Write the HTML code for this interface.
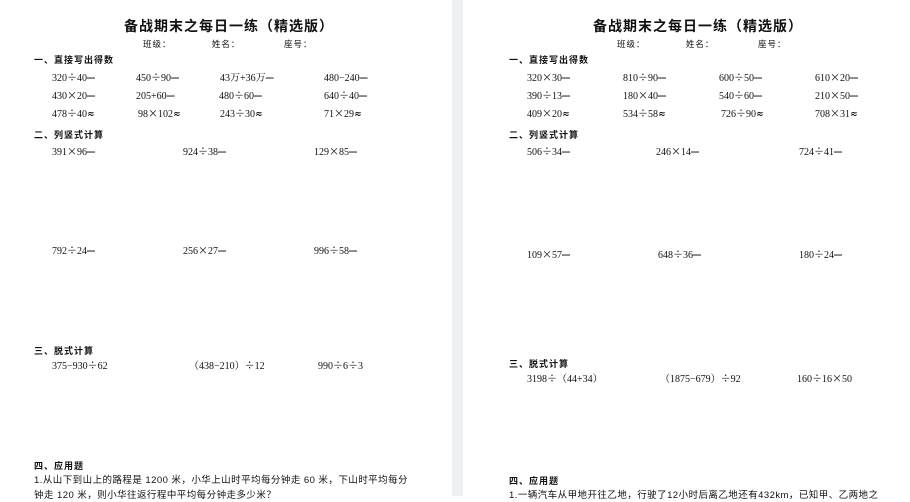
<!DOCTYPE html><html><head><meta charset="utf-8"><style>
body{margin:0;width:910px;height:496px;overflow:hidden;background:#fff;position:relative;font-family:"Liberation Serif","Noto Serif CJK SC",serif;color:#111}
.t{position:absolute;white-space:nowrap;font-size:10px;line-height:12px;height:12px}
.t s{text-decoration:none;font-family:"Noto Sans CJK SC",sans-serif;font-size:10px;line-height:0;vertical-align:0}
.t b{font-family:"Noto Sans CJK SC",sans-serif;font-weight:900;font-size:8px;line-height:0;vertical-align:0}
.h{font-family:"Liberation Sans","Noto Sans CJK SC",sans-serif;font-weight:bold;font-size:9px;letter-spacing:1px}
.ti{font-family:"Liberation Sans","Noto Sans CJK SC",sans-serif;font-weight:bold;font-size:14px;line-height:16px;letter-spacing:1px}
.i{font-family:"Liberation Sans","Noto Sans CJK SC",sans-serif;font-size:8.5px;letter-spacing:1px}
.p{font-family:"Liberation Sans","Noto Sans CJK SC",sans-serif;font-size:9.5px;letter-spacing:0.45px}
</style></head><body>
<div style="position:absolute;left:452px;top:0;width:11px;height:496px;background:#eef0f4"></div>
<!-- left -->
<div class="t ti" style="left:124px;top:18px">备战期末之每日一练（精选版）</div>
<div class="t i" style="left:143px;top:38px">班级：&nbsp;&nbsp;&nbsp;&nbsp;&nbsp;&nbsp;&nbsp;&nbsp;&nbsp;&nbsp;&nbsp;&nbsp;姓名：&nbsp;&nbsp;&nbsp;&nbsp;&nbsp;&nbsp;&nbsp;&nbsp;&nbsp;&nbsp;&nbsp;&nbsp;&nbsp;座号：</div>
<div class="t h" style="left:34px;top:54px">一、直接写出得数</div>
<div class="t" style="left:52px;top:73px">320<s>÷</s>40<b>━</b></div><div class="t" style="left:136px;top:73px">450<s>÷</s>90<b>━</b></div><div class="t" style="left:220px;top:73px">43万+36万<b>━</b></div><div class="t" style="left:324px;top:73px">480−240<b>━</b></div>
<div class="t" style="left:52px;top:91px">430<s>×</s>20<b>━</b></div><div class="t" style="left:136px;top:91px">205+60<b>━</b></div><div class="t" style="left:219px;top:91px">480<s>÷</s>60<b>━</b></div><div class="t" style="left:324px;top:91px">640<s>÷</s>40<b>━</b></div>
<div class="t" style="left:52px;top:109px">478<s>÷</s>40<b>≈</b></div><div class="t" style="left:138px;top:109px">98<s>×</s>102<b>≈</b></div><div class="t" style="left:220px;top:109px">243<s>÷</s>30<b>≈</b></div><div class="t" style="left:324px;top:109px">71<s>×</s>29<b>≈</b></div>
<div class="t h" style="left:34px;top:129px">二、列竖式计算</div>
<div class="t" style="left:52px;top:147px">391<s>×</s>96<b>━</b></div><div class="t" style="left:183px;top:147px">924<s>÷</s>38<b>━</b></div><div class="t" style="left:314px;top:147px">129<s>×</s>85<b>━</b></div>
<div class="t" style="left:52px;top:246px">792<s>÷</s>24<b>━</b></div><div class="t" style="left:183px;top:246px">256<s>×</s>27<b>━</b></div><div class="t" style="left:314px;top:246px">996<s>÷</s>58<b>━</b></div>
<div class="t h" style="left:34px;top:345px">三、脱式计算</div>
<div class="t" style="left:52px;top:361px">375−930<s>÷</s>62</div><div class="t" style="left:189px;top:361px">（438−210）<s>÷</s>12</div><div class="t" style="left:318px;top:361px">990<s>÷</s>6<s>÷</s>3</div>
<div class="t h" style="left:34px;top:460px">四、应用题</div>
<div class="t p" style="left:34px;top:475px">1.从山下到山上的路程是 1200 米，小华上山时平均每分钟走 60 米，下山时平均每分</div>
<div class="t p" style="left:34px;top:490px">钟走 120 米，则小华往返行程中平均每分钟走多少米？</div>
<!-- right -->
<div class="t ti" style="left:593px;top:18px">备战期末之每日一练（精选版）</div>
<div class="t i" style="left:617px;top:38px">班级：&nbsp;&nbsp;&nbsp;&nbsp;&nbsp;&nbsp;&nbsp;&nbsp;&nbsp;&nbsp;&nbsp;&nbsp;姓名：&nbsp;&nbsp;&nbsp;&nbsp;&nbsp;&nbsp;&nbsp;&nbsp;&nbsp;&nbsp;&nbsp;&nbsp;&nbsp;座号：</div>
<div class="t h" style="left:509px;top:54px">一、直接写出得数</div>
<div class="t" style="left:527px;top:73px">320<s>×</s>30<b>━</b></div><div class="t" style="left:623px;top:73px">810<s>÷</s>90<b>━</b></div><div class="t" style="left:719px;top:73px">600<s>÷</s>50<b>━</b></div><div class="t" style="left:815px;top:73px">610<s>×</s>20<b>━</b></div>
<div class="t" style="left:527px;top:91px">390<s>÷</s>13<b>━</b></div><div class="t" style="left:623px;top:91px">180<s>×</s>40<b>━</b></div><div class="t" style="left:719px;top:91px">540<s>÷</s>60<b>━</b></div><div class="t" style="left:815px;top:91px">210<s>×</s>50<b>━</b></div>
<div class="t" style="left:527px;top:109px">409<s>×</s>20<b>≈</b></div><div class="t" style="left:623px;top:109px">534<s>÷</s>58<b>≈</b></div><div class="t" style="left:721px;top:109px">726<s>÷</s>90<b>≈</b></div><div class="t" style="left:815px;top:109px">708<s>×</s>31<b>≈</b></div>
<div class="t h" style="left:509px;top:129px">二、列竖式计算</div>
<div class="t" style="left:527px;top:147px">506<s>÷</s>34<b>━</b></div><div class="t" style="left:656px;top:147px">246<s>×</s>14<b>━</b></div><div class="t" style="left:799px;top:147px">724<s>÷</s>41<b>━</b></div>
<div class="t" style="left:527px;top:250px">109<s>×</s>57<b>━</b></div><div class="t" style="left:658px;top:250px">648<s>÷</s>36<b>━</b></div><div class="t" style="left:799px;top:250px">180<s>÷</s>24<b>━</b></div>
<div class="t h" style="left:509px;top:358px">三、脱式计算</div>
<div class="t" style="left:527px;top:374px">3198<s>÷</s>（44+34）</div><div class="t" style="left:660px;top:374px">（1875−679）<s>÷</s>92</div><div class="t" style="left:797px;top:374px">160<s>÷</s>16<s>×</s>50</div>
<div class="t h" style="left:509px;top:475px">四、应用题</div>
<div class="t p" style="left:509px;top:490px">1.一辆汽车从甲地开往乙地，行驶了12小时后离乙地还有432km，已知甲、乙两地之</div>
</body></html>
